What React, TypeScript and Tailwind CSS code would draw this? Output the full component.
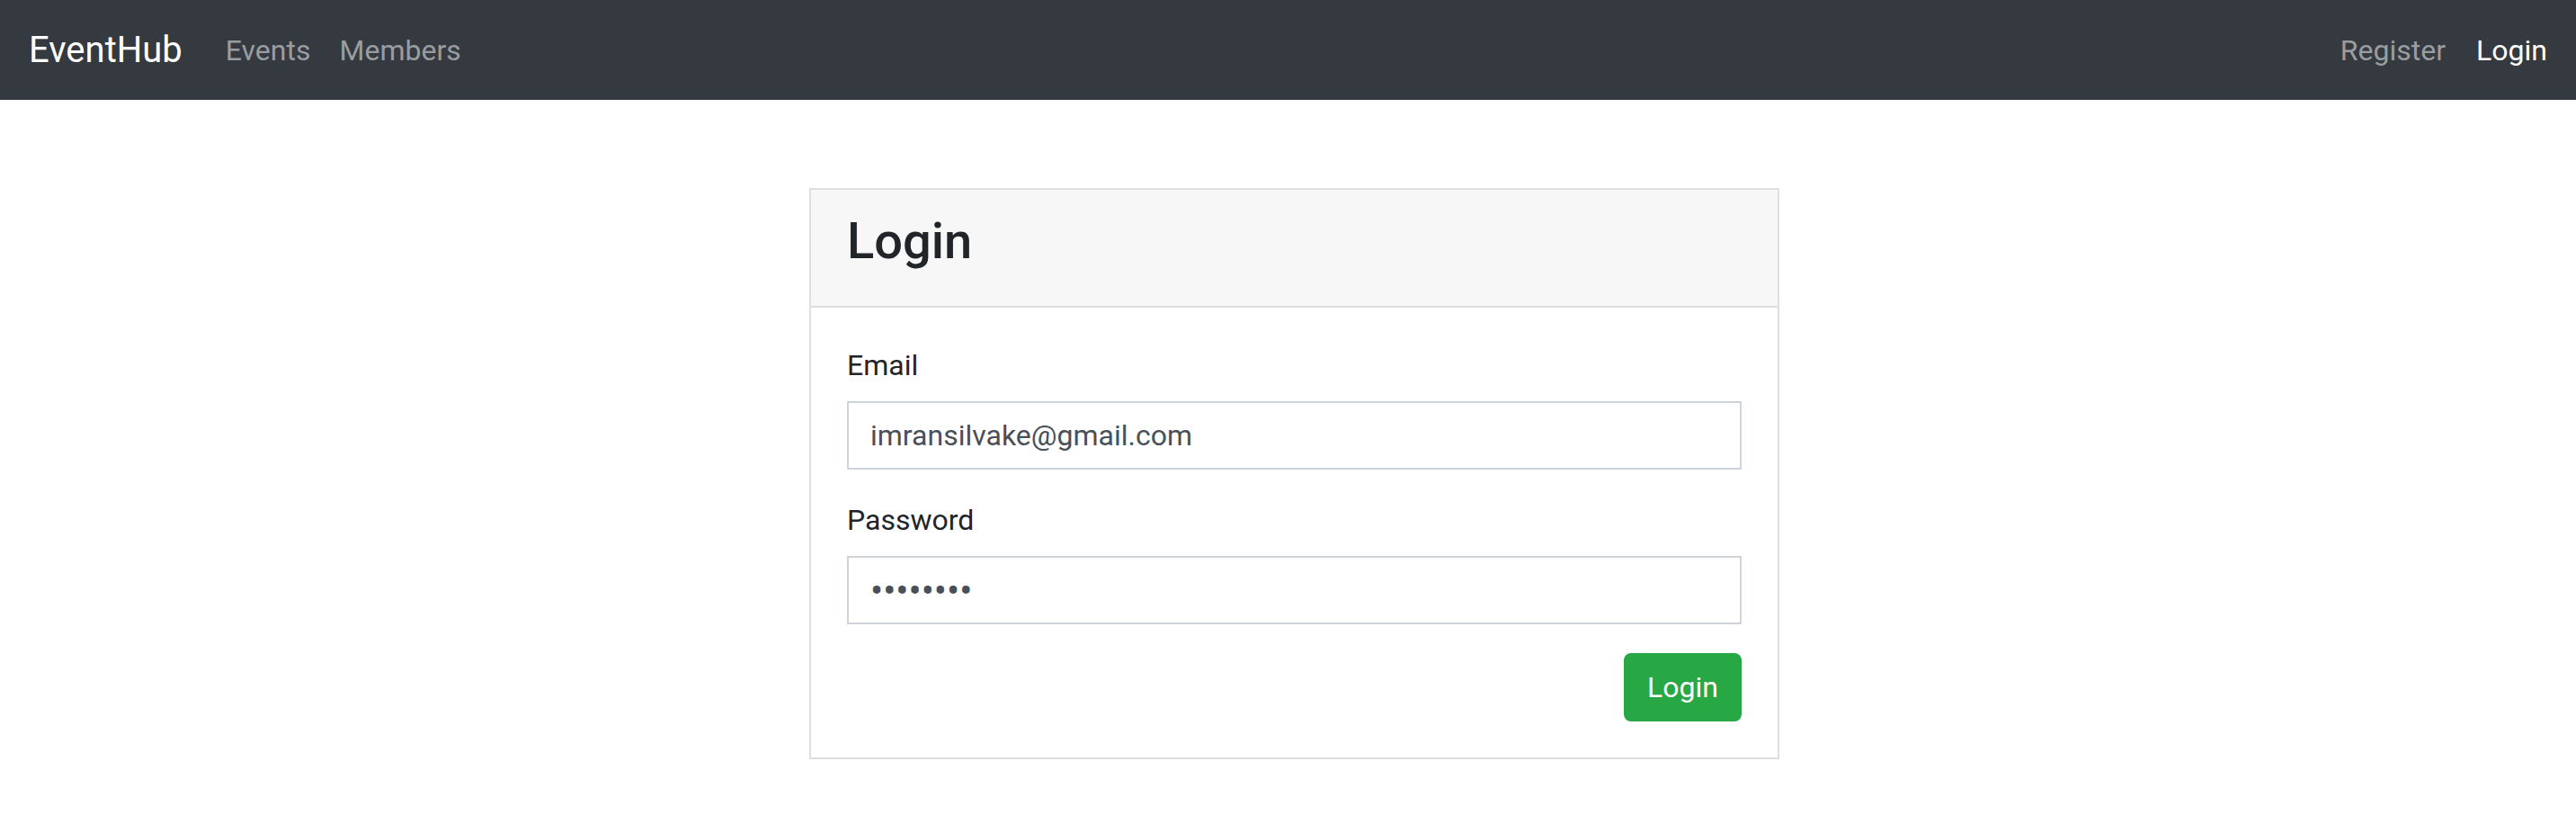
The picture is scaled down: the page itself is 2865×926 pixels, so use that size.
import React from "react";

export default function App() {
  return (
    <div className="min-h-screen bg-white font-['Roboto','Liberation_Sans',sans-serif]">
      <nav className="h-[111px] bg-[#343a40] flex items-center pl-8 pr-4">
        <a href="#" className="text-[40px] leading-[60px] text-white mr-8">
          EventHub
        </a>
        <ul className="flex">
          <li>
            <a href="#" className="block px-4 text-[32px] leading-[48px] text-[#9a9da0]">
              Events
            </a>
          </li>
          <li>
            <a href="#" className="block px-4 text-[32px] leading-[48px] text-[#9a9da0]">
              Members
            </a>
          </li>
        </ul>
        <ul className="flex ml-auto">
          <li>
            <a href="#" className="block pl-4 pr-[18px] text-[32px] leading-[48px] text-[#9a9da0]">
              Register
            </a>
          </li>
          <li>
            <a href="#" className="block px-4 text-[32px] leading-[48px] text-white">
              Login
            </a>
          </li>
        </ul>
      </nav>

      <main className="flex justify-center pl-[14px] pt-[98px]">
        <div className="w-[1079px] border-2 border-[#dfdfdf] bg-white">
          <div className="bg-[#f7f7f7] border-b-2 border-[#dfdfdf] px-10 pt-6 pb-[22px]">
            <h3 className="text-[56px] leading-[1.2] mb-4 text-[#212529] font-medium">Login</h3>
          </div>
          <div className="px-10 py-10">
            <form onSubmit={(e) => e.preventDefault()}>
              <div className="mb-8">
                <label className="block text-[32px] leading-[48px] mb-4 text-[#212529]">Email</label>
                <input
                  type="email"
                  defaultValue="imransilvake@gmail.com"
                  className="block w-full h-[76px] px-6 border-2 border-[#ced4da] text-[32px] text-[#495057] bg-white outline-none"
                />
              </div>
              <div className="mb-8">
                <label className="block text-[32px] leading-[48px] mb-4 text-[#212529]">Password</label>
                <input
                  type="password"
                  defaultValue="12345678"
                  className="block w-full h-[76px] px-6 border-2 border-[#ced4da] text-[42px] text-[#495057] bg-white outline-none"
                />
              </div>
              <div className="flex justify-end">
                <button
                  type="submit"
                  className="bg-[#28a745] border-2 border-[#28a745] text-white text-[32px] leading-[48px] px-6 py-3 rounded-[8px]"
                >
                  Login
                </button>
              </div>
            </form>
          </div>
        </div>
      </main>
    </div>
  );
}
